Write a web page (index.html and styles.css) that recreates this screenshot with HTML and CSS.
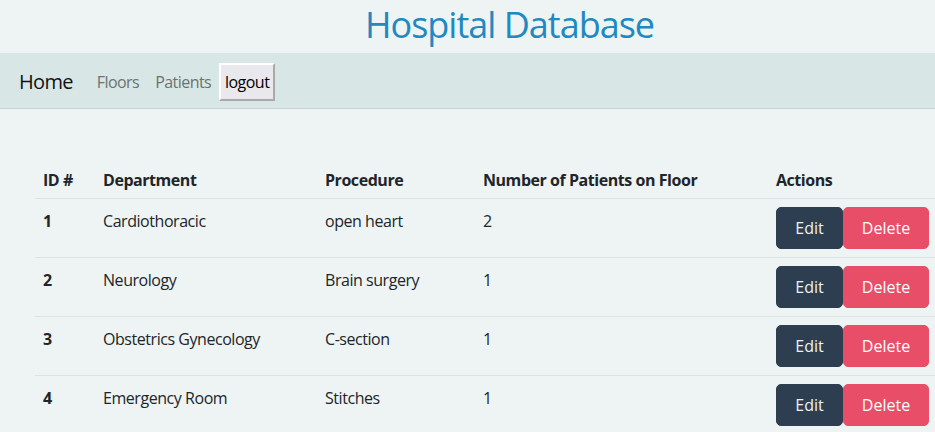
FILE: index.html
```html
<!DOCTYPE html>
<html lang="en">
<head>
<meta charset="utf-8">
<title>Hospital Database</title>
<link rel="stylesheet" href="styles.css">
</head>
<body>
<header class="site-header">
  <h1 class="site-title">Hospital Database</h1>
</header>
<nav class="navbar">
  <a class="brand" href="#">Home</a>
  <a class="nav-link" href="#">Floors</a>
  <a class="nav-link" href="#">Patients</a>
  <button class="logout" type="button">logout</button>
</nav>
<main class="content">
  <table class="floors">
    <colgroup>
      <col class="c-id"><col class="c-dept"><col class="c-proc"><col class="c-num"><col class="c-act">
    </colgroup>
    <thead>
      <tr><th>ID #</th><th>Department</th><th>Procedure</th><th>Number of Patients on Floor</th><th>Actions</th></tr>
    </thead>
    <tbody>
      <tr><th>1</th><td>Cardiothoracic</td><td>open heart</td><td>2</td><td class="actions"><button class="btn btn-edit">Edit</button><button class="btn btn-delete">Delete</button></td></tr>
      <tr><th>2</th><td>Neurology</td><td>Brain surgery</td><td>1</td><td class="actions"><button class="btn btn-edit">Edit</button><button class="btn btn-delete">Delete</button></td></tr>
      <tr><th>3</th><td>Obstetrics Gynecology</td><td>C-section</td><td>1</td><td class="actions"><button class="btn btn-edit">Edit</button><button class="btn btn-delete">Delete</button></td></tr>
      <tr><th>4</th><td>Emergency Room</td><td>Stitches</td><td>1</td><td class="actions"><button class="btn btn-edit">Edit</button><button class="btn btn-delete">Delete</button></td></tr>
    </tbody>
  </table>
</main>
</body>
</html>
```
FILE: styles.css
```css
html, body {
  margin: 0;
  padding: 0;
}
body {
  background: #eef4f4;
  color: #212529;
  font-family: "Open Sans", "Noto Sans", sans-serif;
  font-size: 16px;
  line-height: 1.5;
  overflow-x: hidden;
}
.site-header {
  height: 53px;
  padding-left: 84px;
  text-align: center;
}
.site-title {
  margin: 0;
  font-size: 36px;
  font-weight: 400;
  line-height: 50px;
  color: #2189c2;
  letter-spacing: -1px;
}
.navbar {
  display: flex;
  align-items: center;
  height: 56px;
  padding: 2px 19px 0;
  box-sizing: border-box;
  background: #d8e7e6;
  border-bottom: 1px solid #c5d0d0;
}
.brand {
  font-size: 20px;
  color: #111;
  text-decoration: none;
  margin-right: 16px;
  letter-spacing: -0.7px;
}
.nav-link {
  color: #6b7272;
  text-decoration: none;
  padding: 0 8px;
  letter-spacing: -0.55px;
}
.logout {
  font-family: inherit;
  font-size: 16px;
  color: #000;
  background: #e9e8ec;
  border: 2px solid #a9a9a9;
  border-top-color: #fff;
  border-left-color: #fff;
  height: 38px;
  width: 56px;
  padding: 0;
  margin-left: 0;
  letter-spacing: -0.5px;
}
.content {
  padding: 49px 0 0 35px;
}
.floors {
  width: 902px;
  border-collapse: collapse;
  table-layout: fixed;
}
.c-id { width: 60px; }
.c-dept { width: 222px; }
.c-proc { width: 158px; }
.c-num { width: 293px; }
.c-act { width: 169px; }
.floors th, .floors td {
  text-align: left;
  vertical-align: top;
  padding: 10px 8px 6px;
  border-bottom: 1px solid #dde2e4;
  letter-spacing: -0.45px;
  white-space: nowrap;
}
.floors th {
  font-weight: 700;
}
.floors td {
  font-weight: 400;
}
.floors td.actions {
  font-size: 0;
  padding: 8px 8px 8px;
}
.btn {
  font-family: inherit;
  font-size: 16px;
  line-height: 24px;
  border: 1px solid transparent;
  border-radius: 5px;
  padding: 8px 0;
  color: #eef2f3;
  cursor: pointer;
}
.btn-edit {
  width: 67px;
  background: #2c3e50;
  border-color: #2c3e50;
}
.btn-delete {
  width: 86px;
  background: #e84e67;
  border-color: #e84e67;
  color: #fff;
}
```
